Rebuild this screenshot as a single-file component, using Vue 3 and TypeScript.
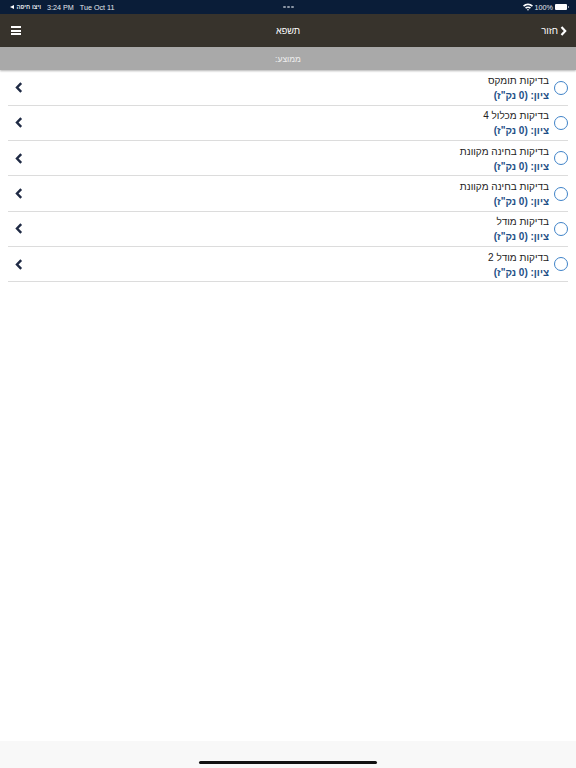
<template>
  <div class="page">
    <div class="status-bar">
      <div class="status-left">
        <span class="back-arrow"></span>
        <span class="status-app" dir="rtl">ויצו חיפה</span>
        <span class="status-time">3:24 PM</span>
        <span class="status-date">Tue Oct 11</span>
      </div>
      <div class="status-dots"><i></i><i></i><i></i></div>
      <div class="status-right">
        <svg class="wifi" width="10" height="8" viewBox="0 0 10 8">
          <path d="M0 2.6C2.8-.2 7.2-.2 10 2.6L8.9 3.8C6.7 1.7 3.3 1.7 1.1 3.8Z" fill="#fff" />
          <path d="M2 4.6C3.7 3 6.3 3 8 4.6L6.9 5.8C5.8 4.8 4.2 4.8 3.1 5.8Z" fill="#fff" />
          <path d="M3.9 6.5C4.5 6 5.5 6 6.1 6.5L5 7.8Z" fill="#fff" />
        </svg>
        <span>100%</span>
        <span class="battery"></span>
      </div>
    </div>

    <header class="top-bar">
      <button class="menu-btn" aria-label="menu"><i></i><i></i><i></i></button>
      <span class="top-title">תשפא</span>
      <div class="back-link">
        <span dir="rtl">חזור</span>
        <svg width="7" height="10" viewBox="0 0 7 10">
          <path d="M1.5 1L5.2 5L1.5 9" fill="none" stroke="#fff" stroke-width="2.2" />
        </svg>
      </div>
    </header>

    <div class="average-bar" dir="rtl">ממוצע:</div>

    <ul class="list">
      <li v-for="(item, i) in items" :key="i" class="row">
        <svg class="chevron" width="8" height="11" viewBox="0 0 8 11">
          <path d="M6.2 1.2L2 5.5L6.2 9.8" fill="none" stroke="#1f2a44" stroke-width="2.4" />
        </svg>
        <div class="row-text" dir="rtl">
          <div class="row-name">{{ item }}</div>
          <div class="row-grade">ציון: (0 נק"ז)</div>
        </div>
        <span class="radio"></span>
      </li>
    </ul>

    <footer class="bottom-bar"><span class="home-bar"></span></footer>
  </div>
</template>

<script setup lang="ts">
const items: string[] = [
  "בדיקות תומקס",
  "בדיקות מכלול 4",
  "בדיקות בחינה מקוונת",
  "בדיקות בחינה מקוונת",
  "בדיקות מודל",
  "בדיקות מודל 2",
];
</script>

<style>
html,
body {
  margin: 0;
  background: #fff;
}
</style>

<style scoped>
.page {
  width: 576px;
  height: 768px;
  display: flex;
  flex-direction: column;
  overflow: hidden;
  font-family: "Liberation Sans", Arial, sans-serif;
  background: #fff;
}

.status-bar {
  height: 14px;
  flex: none;
  display: grid;
  grid-template-columns: 1fr auto 1fr;
  align-items: center;
  padding: 0 9px 0 10px;
  background: #0a1d38;
  color: #e4e8ee;
  font-size: 7.2px;
}

.status-left {
  display: flex;
  align-items: center;
}

.back-arrow {
  width: 0;
  height: 0;
  border-top: 2.5px solid transparent;
  border-bottom: 2.5px solid transparent;
  border-right: 4px solid #fff;
  margin-right: 2px;
}

.status-app {
  font-size: 6px;
  font-weight: 700;
  white-space: nowrap;
  width: 25px;
  margin-right: 6px;
}

.status-time {
  margin-right: 6px;
}

.status-dots {
  display: flex;
  gap: 1.5px;
}

.status-dots i {
  width: 2.5px;
  height: 2.5px;
  border-radius: 50%;
  background: #8d97a6;
}

.status-right {
  display: flex;
  align-items: center;
  justify-content: flex-end;
  gap: 2px;
}

.battery {
  position: relative;
  width: 12px;
  height: 6px;
  border-radius: 1px;
  background: #fff;
}

.battery::after {
  content: "";
  position: absolute;
  right: -2px;
  top: 2px;
  width: 1px;
  height: 2px;
  background: #8d97a6;
}

.top-bar {
  height: 33px;
  flex: none;
  display: grid;
  grid-template-columns: 1fr auto 1fr;
  align-items: center;
  padding: 0 9px 0 11px;
  background: #37332c;
  color: #fff;
  font-size: 9.5px;
}

.menu-btn {
  display: flex;
  flex-direction: column;
  gap: 1.6px;
  width: 10px;
  padding: 0;
  border: 0;
  background: none;
}

.menu-btn i {
  height: 2px;
  width: 10px;
  background: #fff;
}

.top-title {
  font-size: 9.2px;
  margin-right: 2px;
}

.back-link {
  display: flex;
  align-items: center;
  justify-content: flex-end;
  gap: 2px;
}

.average-bar {
  height: 23px;
  flex: none;
  display: flex;
  align-items: center;
  justify-content: center;
  background: #a9a9a9;
  color: #eee;
  font-size: 8.5px;
  box-shadow: 0 1px 2px rgba(0, 0, 0, 0.3);
}

.list {
  list-style: none;
  margin: 0;
  padding: 0.5px 8px 0;
  flex: 1;
}

.row {
  height: 35.3px;
  box-sizing: border-box;
  display: flex;
  align-items: center;
  border-bottom: 1px solid #dcdcdc;
}

.chevron {
  margin-left: 7px;
  margin-right: auto;
}

.row-text {
  display: flex;
  flex-direction: column;
  gap: 2px;
  padding-top: 1px;
  text-align: right;
}

.row-name {
  font-size: 10px;
  line-height: 13px;
  color: #222;
}

.row-grade {
  font-size: 10px;
  line-height: 13px;
  font-weight: 700;
  color: #1e4f86;
}

.radio {
  width: 14px;
  height: 14px;
  box-sizing: border-box;
  border: 1.4px solid #3f83c8;
  border-radius: 50%;
  margin: 0 0 0 5px;
}

.bottom-bar {
  height: 27px;
  flex: none;
  display: flex;
  justify-content: center;
  background: #f8f8f8;
}

.home-bar {
  width: 178px;
  height: 3px;
  margin-top: 20px;
  border-radius: 2px;
  background: #111;
}
</style>
